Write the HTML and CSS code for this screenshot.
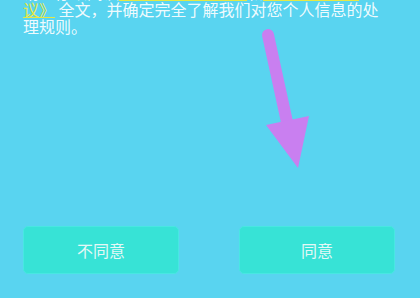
FILE: index.html
```html
<!DOCTYPE html>
<html lang="zh-CN">
<head>
    <meta charset="UTF-8">
    <meta name="viewport" content="width=device-width, initial-scale=1.0">
    <title>隐私政策</title>
    <link rel="stylesheet" href="styles.css">
</head>
<body>

    <div class="page">
        <p class="notice">
            请您仔细阅读<a class="link">《用户服务协议》</a>和<a class="link">《隐私政策协<br>议》</a> 全文，并确定完全了解我们对您个人信息的处<br>理规则。
        </p>

        <div class="actions">
            <button class="btn">不同意</button>
            <button class="btn">同意</button>
        </div>
    </div>

    <!-- hint arrow drawn over the page -->
    <svg class="arrow" width="420" height="298" viewBox="0 0 420 298">
        <line x1="268" y1="35" x2="287" y2="122" stroke="#c97ff0" stroke-width="12" stroke-linecap="round"/>
        <polygon points="266,125 309,116 298,168" fill="#c97ff0"/>
    </svg>

</body>
</html>
```

FILE: styles.css
```css
/* Basic Styles */
body {
    background-color: #59d4f0;
    font-family: "Noto Sans CJK SC", "Noto Sans", sans-serif;
    margin: 0;
    padding: 0;
    overflow: hidden;
}

.page {
    height: 100vh;
    display: flex;
    flex-direction: column;
    justify-content: space-between;
    box-sizing: border-box;
    padding-bottom: 24px;
}

/* Notice text */
.notice {
    margin: -16px 0 0 0;
    padding: 0 20px 0 23px;
    font-size: 16px;
    line-height: 17px;
    color: rgba(255, 255, 255, 0.92);
}

.link {
    color: #e6e845;
    text-decoration: underline;
    text-underline-offset: 1px;
}

/* Buttons */
.actions {
    display: flex;
    justify-content: space-between;
    padding: 0 25px 0 23px;
}

.btn {
    width: 156px;
    height: 48px;
    background-color: #37e3d6;
    border: 1px solid #48e7e2;
    border-radius: 5px;
    color: #e4f8f6;
    font-family: "Noto Sans CJK SC", "Noto Sans", sans-serif;
    font-size: 16px;
    cursor: pointer;
}

.arrow {
    position: absolute;
    left: 0;
    top: 0;
    pointer-events: none;
}
```
